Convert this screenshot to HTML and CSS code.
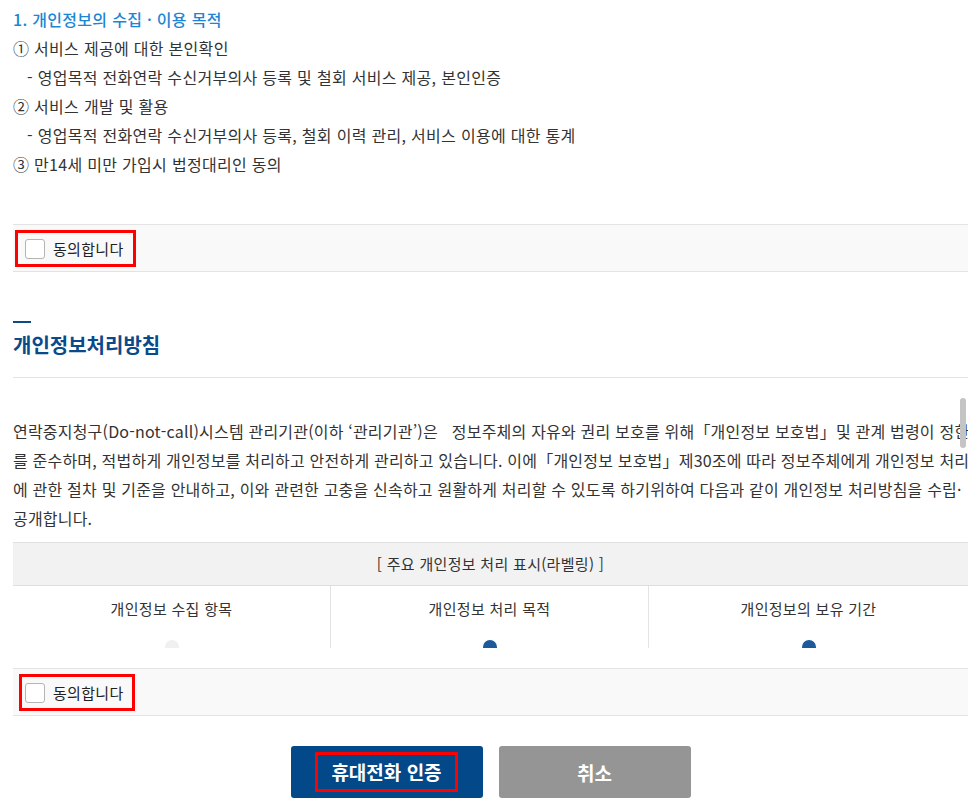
FILE: index.html
```html
<!DOCTYPE html>
<html lang="ko">
<head>
    <meta charset="UTF-8">
    <meta name="viewport" content="width=device-width, initial-scale=1.0">
    <title>개인정보 수집 및 이용 동의</title>
    <link rel="stylesheet" href="styles.css">
</head>
<body>
    <div class="terms">
        <p class="terms-title">1. 개인정보의 수집 · 이용 목적</p>
        <p>① 서비스 제공에 대한 본인확인</p>
        <p class="sub">- 영업목적 전화연락 수신거부의사 등록 및 철회 서비스 제공, 본인인증</p>
        <p>② 서비스 개발 및 활용</p>
        <p class="sub">- 영업목적 전화연락 수신거부의사 등록, 철회 이력 관리, 서비스 이용에 대한 통계</p>
        <p>③ 만14세 미만 가입시 법정대리인 동의</p>
    </div>

    <div class="agree-bar">
        <label class="agree">
            <span class="check"></span>
            <span>동의합니다</span>
        </label>
    </div>

    <div class="section-head">
        <span class="section-mark"></span>
        <h2>개인정보처리방침</h2>
    </div>

    <div class="policy-box">
        <p class="policy-text">연락중지청구(Do-not-call)시스템 관리기관(이하 ‘관리기관’)은 &nbsp; 정보주체의 자유와 권리 보호를 위해「개인정보 보호법」및 관계 법령이 정한 바<br>를 준수하며, 적법하게 개인정보를 처리하고 안전하게 관리하고 있습니다. 이에「개인정보 보호법」제30조에 따라 정보주체에게 개인정보 처리<br>에 관한 절차 및 기준을 안내하고, 이와 관련한 고충을 신속하고 원활하게 처리할 수 있도록 하기위하여 다음과 같이 개인정보 처리방침을 수립·<br>공개합니다.</p>
        <div class="label-table">
            <div class="label-head">[ 주요 개인정보 처리 표시(라벨링) ]</div>
            <div class="label-row">
                <div class="label-cell">
                    <span>개인정보 수집 항목</span>
                    <span class="label-icon faint"></span>
                </div>
                <div class="label-cell">
                    <span>개인정보 처리 목적</span>
                    <span class="label-icon"></span>
                </div>
                <div class="label-cell">
                    <span>개인정보의 보유 기간</span>
                    <span class="label-icon"></span>
                </div>
            </div>
        </div>
        <div class="thumb"></div>
    </div>

    <div class="agree-bar agree-bar-near">
        <label class="agree agree-low">
            <span class="check"></span>
            <span>동의합니다</span>
        </label>
    </div>

    <div class="buttons">
        <button class="btn btn-primary"><span class="btn-mark">휴대전화 인증</span></button>
        <button class="btn btn-cancel">취소</button>
    </div>
</body>
</html>
```

FILE: styles.css
```css
body {
    font-family: "Noto Sans CJK KR", "Noto Sans", sans-serif;
    color: #333;
    background-color: #fff;
    margin: 0;
    padding: 5px 10px 0 13px;
    letter-spacing: 0.3px;
}
p {
    margin: 0;
}
.terms p {
    font-size: 16px;
    line-height: 29px;
}
.terms .terms-title {
    color: #1a86d4;
    font-weight: 500;
}
.terms .sub {
    padding-left: 14px;
}
.agree-bar {
    margin-top: 45px;
    background-color: #f9f9f9;
    border-top: 1px solid #e3e3e3;
    border-bottom: 1px solid #e3e3e3;
    padding: 5px 0 4px;
    display: flex;
}
.agree-bar-near {
    margin-top: 20px;
}
.agree {
    display: flex;
    align-items: center;
    gap: 8px;
    margin-left: 2px;
    height: 31px;
    padding: 0 9px 0 7px;
    border: 3px solid #ff0000;
    font-size: 15px;
    color: #222;
}
.agree-low {
    margin-left: 6px;
    padding-left: 3px;
    padding-right: 8px;
}
.check {
    width: 18px;
    height: 18px;
    border: 1px solid #b5b5b5;
    border-radius: 3px;
    background-color: #fff;
}
.section-head {
    margin-top: 49px;
    border-bottom: 1px solid #e3e3e3;
    padding-bottom: 17px;
}
.section-mark {
    display: block;
    width: 18px;
    height: 2px;
    background-color: #0b4a8a;
}
.section-head h2 {
    margin: 7px 0 0;
    font-size: 20px;
    line-height: 30px;
    font-weight: 700;
    color: #0b4a8a;
    letter-spacing: 0;
}
.policy-box {
    position: relative;
    height: 270px;
    overflow: hidden;
    padding-top: 39px;
    box-sizing: border-box;
}
.policy-text {
    font-size: 16px;
    line-height: 29px;
    letter-spacing: 0.2px;
    white-space: nowrap;
}
.label-table {
    margin-top: 9px;
    width: 955px;
    border-top: 1px solid #e0e0e0;
}
.label-head {
    background-color: #f2f2f2;
    border-bottom: 1px solid #dedede;
    height: 42px;
    line-height: 42px;
    text-align: center;
    font-size: 15px;
}
.label-row {
    display: grid;
    grid-template-columns: 318px 318px 319px;
}
.label-cell {
    display: flex;
    flex-direction: column;
    align-items: center;
    gap: 19px;
    padding-top: 10px;
    font-size: 15px;
    line-height: 25px;
    border-right: 1px solid #e3e3e3;
    height: 100px;
}
.label-cell:last-child {
    border-right: none;
}
.label-icon {
    width: 14px;
    height: 14px;
    border-radius: 50%;
    background-color: #1d5a9c;
}
.label-icon.faint {
    background-color: #f0f0f0;
}
.thumb {
    position: absolute;
    right: 2px;
    top: 20px;
    width: 6px;
    height: 50px;
    border-radius: 3px;
    background-color: #c4c4c4;
}
.buttons {
    display: flex;
    justify-content: center;
    gap: 16px;
    margin-top: 30px;
}
.btn {
    width: 192px;
    height: 52px;
    border: none;
    border-radius: 3px;
    color: #fff;
    font-family: inherit;
    font-size: 19px;
    font-weight: 700;
    display: flex;
    align-items: center;
    justify-content: center;
}
.btn-primary {
    background-color: #03498a;
}
.btn-cancel {
    background-color: #959595;
}
.btn-mark {
    border: 3px solid #ff0000;
    padding: 0 13px;
    height: 34px;
    line-height: 34px;
}
```
